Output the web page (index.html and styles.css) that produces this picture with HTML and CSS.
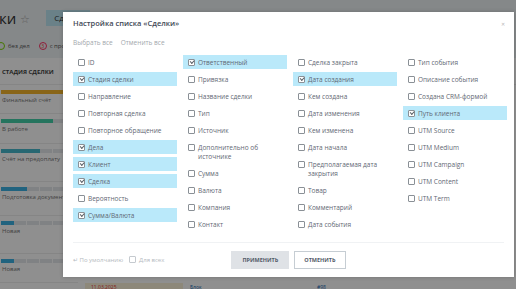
FILE: index.html
```html
<!DOCTYPE html>
<html lang="ru">
<head>
  <meta charset="UTF-8">
  <title>Настройка списка</title>
  <link rel="stylesheet" href="styles.css">
</head>
<body>
  <div class="page">
    <div class="page-top">
      <span class="page-title">ки</span>
      <span class="page-star">☆</span>
      <span class="page-btn">Сделки</span>
    </div>
    <div class="page-filters">
      <span class="dot dot-green"></span> без дел
      <span class="dot dot-red">3</span> с просроченными
    </div>
    <div class="stage-head">СТАДИЯ СДЕЛКИ</div>
    <div class="stage-row h29">
      <div class="bar"><div class="bar-fill orange" style="width: 100%"></div></div>
      <div class="stage-name">Финальный счёт</div>
    </div>
    <div class="stage-row h30">
      <div class="bar"><div class="bar-fill green" style="width: 67%"></div></div>
      <div class="stage-name">В работе</div>
    </div>
    <div class="stage-row h38">
      <div class="bar"><div class="bar-fill teal" style="width: 50%"></div></div>
      <div class="stage-name">Счёт на предоплату</div>
    </div>
    <div class="stage-row h34">
      <div class="bar"><div class="bar-fill blue" style="width: 34%"></div></div>
      <div class="stage-name">Подготовка документов</div>
    </div>
    <div class="stage-row h38">
      <div class="bar"><div class="bar-fill blue" style="width: 17%"></div></div>
      <div class="stage-name">Новая</div>
    </div>
    <div class="stage-row h29">
      <div class="bar"><div class="bar-fill blue" style="width: 17%"></div></div>
      <div class="stage-name">Новая</div>
    </div>
    <div class="stage-row last">
      <div class="bar"><div class="bar-fill green" style="width: 67%"></div></div>
      <div class="date-cell">11.03.2025</div>
      <div class="link-cell">Блок</div>
      <div class="link-cell">#98</div>
    </div>
  </div>

  <div class="overlay"></div>

  <div class="modal">
    <span class="modal-close">✕</span>
    <div class="modal-title">Настройка списка «Сделки»</div>
    <div class="modal-actions">
      <span>Выбрать все</span>
      <span>Отменить все</span>
    </div>

    <div class="fields">
      <div class="field-col">
        <label class="field"><span class="box"></span>ID</label>
        <label class="field on"><span class="box"></span>Стадия сделки</label>
        <label class="field"><span class="box"></span>Направление</label>
        <label class="field"><span class="box"></span>Повторная сделка</label>
        <label class="field"><span class="box"></span>Повторное обращение</label>
        <label class="field on"><span class="box"></span>Дела</label>
        <label class="field on"><span class="box"></span>Клиент</label>
        <label class="field on"><span class="box"></span>Сделка</label>
        <label class="field"><span class="box"></span>Вероятность</label>
        <label class="field on"><span class="box"></span>Сумма/Валюта</label>
      </div>
      <div class="field-col">
        <label class="field on"><span class="box"></span>Ответственный</label>
        <label class="field"><span class="box"></span>Привязка</label>
        <label class="field"><span class="box"></span>Название сделки</label>
        <label class="field"><span class="box"></span>Тип</label>
        <label class="field"><span class="box"></span>Источник</label>
        <label class="field"><span class="box"></span>Дополнительно об источнике</label>
        <label class="field"><span class="box"></span>Сумма</label>
        <label class="field"><span class="box"></span>Валюта</label>
        <label class="field"><span class="box"></span>Компания</label>
        <label class="field"><span class="box"></span>Контакт</label>
      </div>
      <div class="field-col">
        <label class="field"><span class="box"></span>Сделка закрыта</label>
        <label class="field on"><span class="box"></span>Дата создания</label>
        <label class="field"><span class="box"></span>Кем создана</label>
        <label class="field"><span class="box"></span>Дата изменения</label>
        <label class="field"><span class="box"></span>Кем изменена</label>
        <label class="field"><span class="box"></span>Дата начала</label>
        <label class="field"><span class="box"></span>Предполагаемая дата закрытия</label>
        <label class="field"><span class="box"></span>Товар</label>
        <label class="field"><span class="box"></span>Комментарий</label>
        <label class="field"><span class="box"></span>Дата события</label>
      </div>
      <div class="field-col">
        <label class="field"><span class="box"></span>Тип события</label>
        <label class="field"><span class="box"></span>Описание события</label>
        <label class="field"><span class="box"></span>Создана CRM-формой</label>
        <label class="field on"><span class="box"></span>Путь клиента</label>
        <label class="field"><span class="box"></span>UTM Source</label>
        <label class="field"><span class="box"></span>UTM Medium</label>
        <label class="field"><span class="box"></span>UTM Campaign</label>
        <label class="field"><span class="box"></span>UTM Content</label>
        <label class="field"><span class="box"></span>UTM Term</label>
      </div>
    </div>

    <div class="modal-footer">
      <div class="footer-left">
        <span class="reset">↵ По умолчанию</span>
        <label class="for-all"><span class="box"></span>Для всех</label>
      </div>
      <div class="footer-buttons">
        <button class="btn btn-apply">Применить</button>
        <button class="btn btn-cancel">Отменить</button>
      </div>
      <div></div>
    </div>
  </div>
</body>
</html>
```

FILE: styles.css
```css
html, body {
  margin: 0;
  padding: 0;
  height: 100%;
  overflow: hidden;
}
body {
  font-family: "Open Sans", "Liberation Sans", sans-serif;
  background: #fff;
  color: #333;
}

/* page behind the popup */
.page {
  width: 516px;
  height: 289px;
}
.page-top {
  height: 36px;
  background: #eef2f4;
  display: flex;
  align-items: center;
}
.page-title {
  font-size: 15px;
  color: #333;
  margin-left: -1px;
}
.page-star {
  font-size: 11px;
  color: #aaa;
  margin-left: 4px;
}
.page-btn {
  margin-left: 16px;
  background: #bde6f3;
  height: 16px;
  line-height: 16px;
  padding: 0 8px;
  font-size: 8px;
  color: #333;
}
.page-filters {
  height: 20px;
  background: #eef2f4;
  font-size: 6px;
  color: #555;
  display: flex;
  align-items: center;
  gap: 3px;
  padding-bottom: 2px;
}
.dot {
  width: 8px;
  height: 8px;
  border-radius: 50%;
  border: 1px solid #7bd500;
  box-sizing: border-box;
  margin-left: -3px;
}
.dot-red {
  border-color: #f36;
  color: #e33;
  font-size: 5px;
  line-height: 6px;
  text-align: center;
  margin-left: 6px;
}
.stage-head {
  height: 26px;
  line-height: 28px;
  font-size: 6px;
  font-weight: 700;
  color: #444;
  padding-left: 2px;
  border-bottom: 1px solid #eee;
}
.stage-row {
  padding-top: 5px;
  box-sizing: border-box;
  border-bottom: 1px solid #eee;
  width: 78px;
}
.h29 { height: 29px; }
.h30 { height: 30px; }
.h34 { height: 34px; }
.h38 { height: 38px; }
.bar {
  margin-left: 1px;
  height: 4px;
  width: 77px;
  background: repeating-linear-gradient(90deg, #e4e8eb 0 12px, #fff 12px 13px);
}
.bar-fill {
  height: 100%;
}
.orange { background: #f4b52c; }
.green { background: #43cfa8; }
.teal { background: #46b8cc; }
.blue { background: #3bb0e2; }
.stage-name {
  font-size: 6px;
  color: #777;
  margin-top: 2px;
  padding-left: 2px;
}
.stage-row.last {
  width: auto;
  display: grid;
  grid-template-columns: 78px 98px 120px 120px;
  column-gap: 7px;
  border: 0;
  padding-top: 6px;
}
.date-cell {
  background: #fbf3d9;
  color: #e33;
  font-size: 5px;
  line-height: 6px;
  padding: 1px 6px 4px;
  margin-top: -6px;
}
.link-cell {
  color: #2067b0;
  font-size: 5px;
  line-height: 6px;
  margin-top: -5px;
}

.overlay {
  position: absolute;
  inset: 0;
  background: rgba(0, 0, 0, 0.44);
}

/* popup */
.modal {
  position: absolute;
  left: 63px;
  top: 12px;
  width: 451px;
  height: 265px;
  background: #fff;
  box-shadow: 0 0 4px rgba(0, 0, 0, 0.2);
  box-sizing: border-box;
  padding: 0 10px;
  display: flex;
  flex-direction: column;
}
.modal-close {
  position: absolute;
  right: 9px;
  top: 9px;
  font-size: 5px;
  line-height: 6px;
  color: #b7b7b7;
}
.modal-title {
  margin-top: 6px;
  font-size: 7.5px;
  line-height: 10px;
  font-weight: 600;
  color: #424956;
}
.modal-actions {
  margin-top: 10px;
  display: flex;
  gap: 8px;
  font-size: 6.5px;
  line-height: 10px;
  color: #a3a8ad;
}
.fields {
  margin-top: 7px;
  display: grid;
  grid-template-columns: repeat(4, 104px);
  column-gap: 6px;
  align-items: start;
}
.field-col {
  display: flex;
  flex-direction: column;
  gap: 3px;
}
.field {
  display: flex;
  align-items: flex-start;
  gap: 2px;
  padding: 2.5px 5px;
  font-size: 6.5px;
  line-height: 9px;
  color: #5f6874;
}
.field.on {
  background: #bae9fa;
}
.box {
  flex: none;
  position: relative;
  width: 7px;
  height: 7px;
  margin-top: 1px;
  margin-right: 1px;
  border: 1px solid #8a9096;
  border-radius: 1px;
  box-sizing: border-box;
  background: #fff;
}
.field.on .box::after {
  content: "";
  position: absolute;
  left: 1px;
  top: 0.5px;
  width: 3px;
  height: 1.5px;
  border-left: 1px solid #5a6168;
  border-bottom: 1px solid #5a6168;
  transform: rotate(-45deg);
}
.modal-footer {
  margin-top: auto;
  border-top: 1px solid #f0f2f4;
  height: 33px;
  display: grid;
  grid-template-columns: 1fr auto 1fr;
  align-items: center;
  padding-bottom: 1px;
}
.footer-left {
  display: flex;
  align-items: center;
  gap: 6px;
  font-size: 6px;
  color: #b5bac0;
}
.for-all {
  display: flex;
  align-items: center;
  gap: 2px;
}
.for-all .box {
  margin-top: 0;
  border-color: #c5cacf;
}
.footer-buttons {
  display: flex;
  gap: 5px;
}
.btn {
  height: 18px;
  border: 1px solid #c6cdd3;
  background: #fff;
  font-family: inherit;
  font-size: 5.5px;
  font-weight: 700;
  text-transform: uppercase;
  color: #535c69;
  padding: 0 9px;
  cursor: pointer;
}
.btn-apply {
  background: #dfe2e6;
  border-color: #dfe2e6;
  padding: 0 10px;
}
```
